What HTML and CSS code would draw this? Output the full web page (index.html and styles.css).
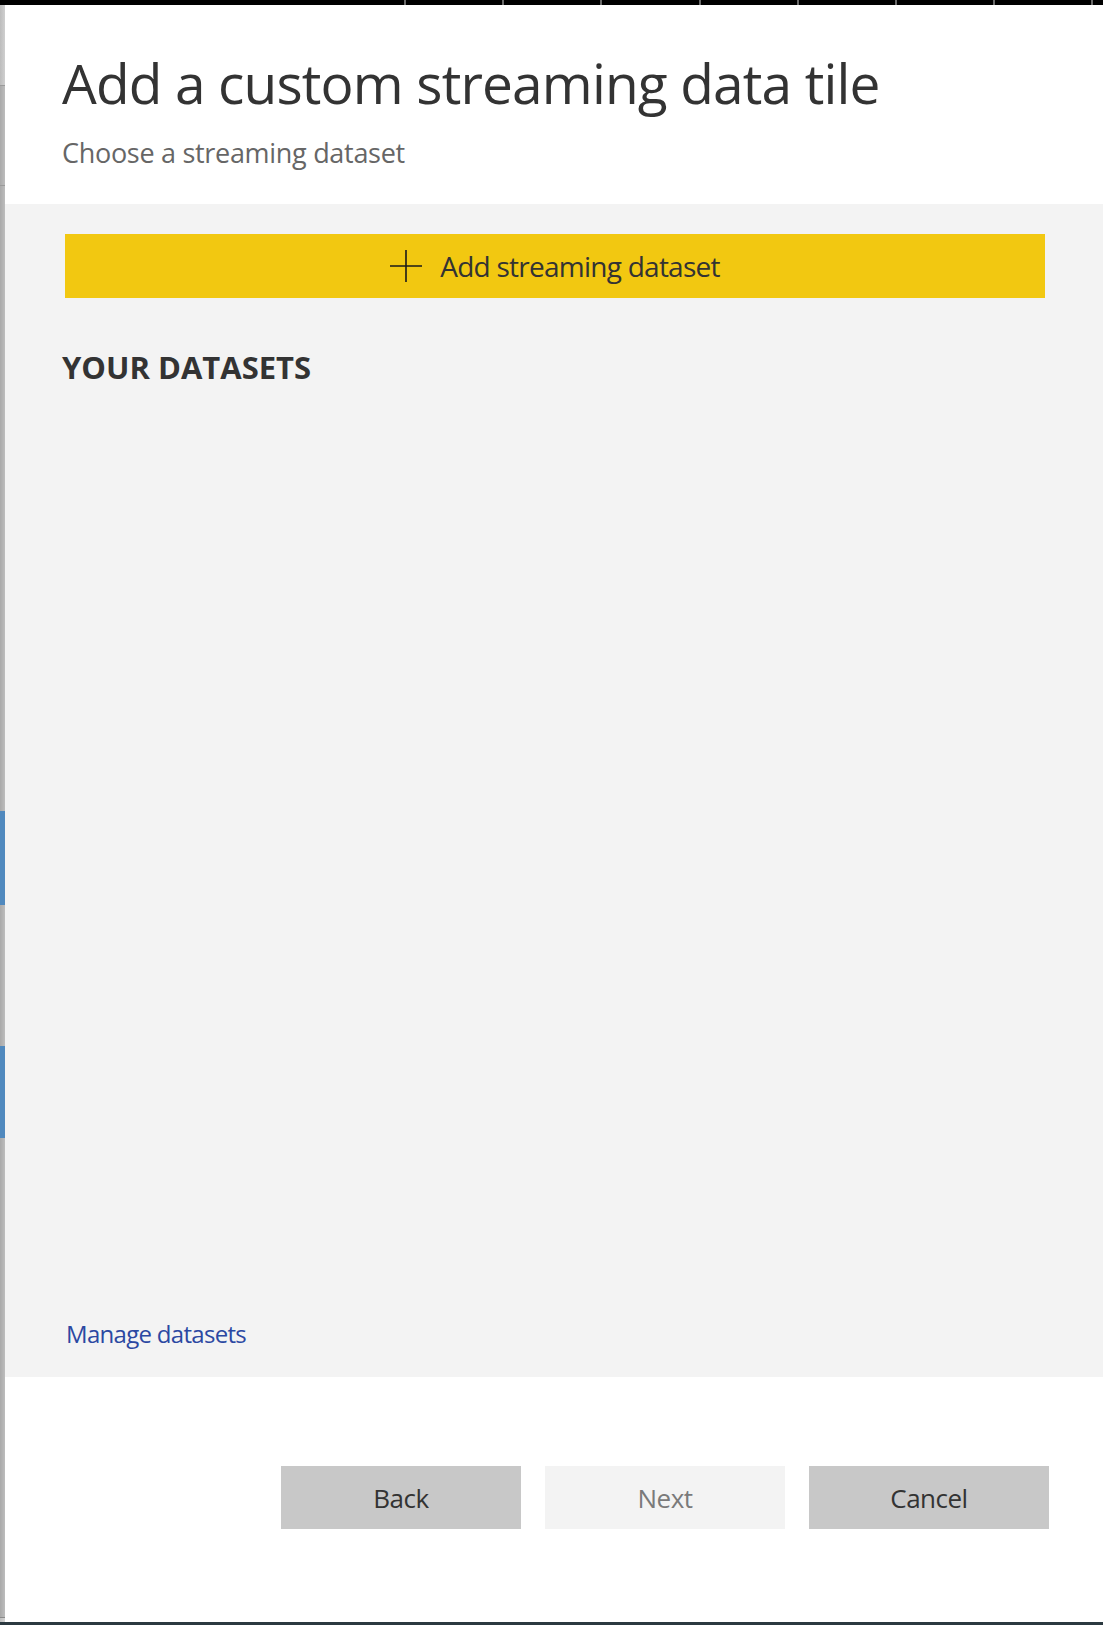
FILE: index.html
```html
<!DOCTYPE html>
<html lang="en">
<head>
<meta charset="utf-8">
<title>Add a custom streaming data tile</title>
<link rel="stylesheet" href="styles.css">
</head>
<body>
<div class="screen">
  <div class="topbar"><div class="ticks"></div></div>
  <div class="main">
    <div class="strip">
      <div class="seg seg-a"></div>
      <div class="seg seg-b"></div>
      <div class="seg seg-c"></div>
      <div class="seg seg-blue seg-blue1"></div>
      <div class="seg seg-d"></div>
      <div class="seg seg-blue seg-blue2"></div>
      <div class="seg seg-e"></div>
      <div class="seg seg-f"></div>
    </div>
    <div class="dialog">
      <header class="dlg-header">
        <h1 class="dlg-title">Add a custom streaming data tile</h1>
        <p class="dlg-subtitle">Choose a streaming dataset</p>
      </header>
      <section class="dlg-body">
        <button class="add-btn" type="button">
          <svg class="plus" width="32" height="32" viewBox="0 0 32 32" aria-hidden="true">
            <path d="M16 0V32M0 16H32" stroke="#1a1a1a" stroke-width="1.6" fill="none"/>
          </svg>
          <span>Add streaming dataset</span>
        </button>
        <h2 class="section-title">YOUR DATASETS</h2>
        <div class="list"></div>
        <a class="manage-link" href="#">Manage datasets</a>
      </section>
      <footer class="dlg-footer">
        <button class="btn" type="button">Back</button>
        <button class="btn btn-disabled" type="button">Next</button>
        <button class="btn" type="button">Cancel</button>
      </footer>
    </div>
  </div>
  <div class="bottombar"></div>
</div>
</body>
</html>
```

FILE: styles.css
```css
* { box-sizing: border-box; }

html, body {
  margin: 0;
  padding: 0;
  background: #ffffff;
}

body {
  font-family: "Open Sans", "Noto Sans", "Liberation Sans", sans-serif;
  color: #333333;
}

.screen {
  width: 1103px;
  height: 1625px;
  display: flex;
  flex-direction: column;
  overflow: hidden;
}

.topbar {
  height: 5px;
  flex: none;
  background-color: #000000;
  padding-left: 404px;
}

.ticks {
  height: 100%;
  background-image: repeating-linear-gradient(to right,
      #6a6a6a 0, #6a6a6a 2px, transparent 2px, transparent 98.2px);
}

.main {
  flex: 1;
  display: flex;
  min-height: 0;
}

.strip {
  width: 5px;
  flex: none;
  display: flex;
  flex-direction: column;
}

.seg { background: linear-gradient(to right, #a9a9a9, #bdbdbd); }
.seg-a { height: 80px; background: linear-gradient(to right, #bcbcbc, #cfcfcf); }
.seg-b { height: 100px; border-top: 1px solid #9a9a9a; }
.seg-c { height: 626px; border-top: 1px solid #9a9a9a; }
.seg-blue { background: #5089be; }
.seg-blue1 { height: 94px; }
.seg-d { height: 141px; }
.seg-blue2 { height: 92px; }
.seg-e { height: 480px; border-bottom: 1px solid #8a8a8a; }
.seg-f { flex: 1; background: linear-gradient(to right, #c0c0c0, #d2d2d2); }

.dialog {
  flex: 1;
  display: flex;
  flex-direction: column;
  min-width: 0;
}

.dlg-header {
  height: 199px;
  flex: none;
  background: #ffffff;
  padding: 40px 0 0 57px;
}

.dlg-title {
  margin: 0;
  font-size: 55px;
  font-weight: 400;
  line-height: 76px;
  color: #333333;
  letter-spacing: -0.85px;
}

.dlg-subtitle {
  margin: 14px 0 0 0;
  font-size: 27px;
  line-height: 36px;
  color: #666666;
  letter-spacing: -0.3px;
}

.dlg-body {
  height: 1173px;
  flex: none;
  background: #f3f3f3;
  padding: 30px 58px 0 60px;
  display: flex;
  flex-direction: column;
}

.add-btn {
  height: 64px;
  width: 100%;
  border: none;
  margin: 0;
  background: #f2c811;
  display: flex;
  align-items: center;
  justify-content: center;
  gap: 18px;
  padding: 0;
  font-family: inherit;
  font-size: 28px;
  color: #333333;
  letter-spacing: -0.75px;
  cursor: pointer;
}

.plus { flex: none; }

.section-title {
  margin: 48px 0 0 -3px;
  font-size: 31px;
  font-weight: 700;
  line-height: 42px;
  color: #333333;
  letter-spacing: 0;
}

.list { flex: 1; }

.manage-link {
  align-self: flex-start;
  margin: 0 0 26px 1px;
  font-size: 24px;
  line-height: 34px;
  color: #2b48a2;
  text-decoration: none;
  letter-spacing: -0.7px;
}

.dlg-footer {
  flex: 1;
  background: #ffffff;
  display: flex;
  justify-content: flex-end;
  align-items: flex-start;
  gap: 24px;
  padding: 89px 54px 0 0;
}

.btn {
  width: 240px;
  height: 63px;
  border: none;
  margin: 0;
  background: #c8c8c8;
  font-family: inherit;
  font-size: 26px;
  color: #333333;
  letter-spacing: -0.5px;
  cursor: pointer;
}

.btn-disabled {
  background: #f3f3f3;
  color: #7a7a7a;
  cursor: default;
}

.bottombar {
  height: 3px;
  flex: none;
  background: #2b3940;
}
```
